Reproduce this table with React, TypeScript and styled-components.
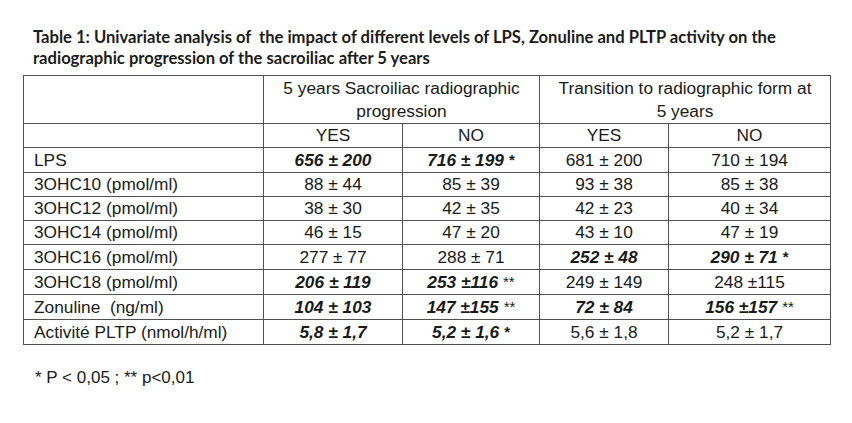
import React from "react";
import styled, { createGlobalStyle } from "styled-components";

const Global = createGlobalStyle`
  html, body { margin: 0; padding: 0; background: #fff; }
  body { font-family: "Liberation Sans", Arial, sans-serif; color: #1a1a1a; }
`;

const Page = styled.div`
  width: 852px;
  height: 423px;
  padding: 27px 0 0 23px;
  box-sizing: border-box;
  display: flex;
  flex-direction: column;
`;

const Title = styled.h1`
  margin: 0 0 0 10px;
  font-family: Lato, "Open Sans", sans-serif;
  font-weight: 700;
  font-size: 16.6px;
  line-height: 21px;
  color: #1c1c1c;
  white-space: pre;
`;

const Table = styled.table`
  margin-top: 6px;
  border-collapse: collapse;
  table-layout: fixed;
  width: 807px;
  font-family: "Liberation Sans", Arial, sans-serif;
  font-size: 17.3px;
  color: #1a1a1a;
`;

const Cell = styled.td<{ $align?: "left" | "center"; $tall?: boolean }>`
  border: 1px solid #505050;
  padding: ${(p) => (p.$align === "left" ? "0 0 0 10px" : "0")};
  text-align: ${(p) => p.$align ?? "center"};
  height: ${(p) => (p.$tall ? "47px" : "23px")};
  line-height: 23px;
  vertical-align: middle;
  white-space: pre;
  overflow: hidden;
`;

const Value = styled.span<{ $strong?: boolean }>`
  font-weight: ${(p) => (p.$strong ? 700 : 400)};
  font-style: ${(p) => (p.$strong ? "italic" : "normal")};
`;

const Star = styled.span<{ $strong?: boolean }>`
  font-weight: ${(p) => (p.$strong ? 700 : 400)};
  font-size: 15px;
  margin-left: 5px;
  vertical-align: 1px;
`;

const Footnote = styled.p`
  margin: 23px 0 0 12px;
  font-size: 17px;
  color: #1a1a1a;
`;

type V = { t: string; b?: boolean; s?: string };

const rows: { label: string; vals: V[] }[] = [
  { label: "LPS", vals: [{ t: "656 ± 200", b: true }, { t: "716 ± 199", b: true, s: "*" }, { t: "681 ± 200" }, { t: "710 ± 194" }] },
  { label: "3OHC10 (pmol/ml)", vals: [{ t: "88 ± 44" }, { t: "85 ± 39" }, { t: "93 ± 38" }, { t: "85 ± 38" }] },
  { label: "3OHC12 (pmol/ml)", vals: [{ t: "38 ± 30" }, { t: "42 ± 35" }, { t: "42 ± 23" }, { t: "40 ± 34" }] },
  { label: "3OHC14 (pmol/ml)", vals: [{ t: "46 ± 15" }, { t: "47 ± 20" }, { t: "43 ± 10" }, { t: "47 ± 19" }] },
  { label: "3OHC16 (pmol/ml)", vals: [{ t: "277 ± 77" }, { t: "288 ± 71" }, { t: "252 ± 48", b: true }, { t: "290 ± 71", b: true, s: "*" }] },
  { label: "3OHC18 (pmol/ml)", vals: [{ t: "206 ± 119", b: true }, { t: "253 ±116", b: true, s: "**" }, { t: "249 ± 149" }, { t: "248 ±115" }] },
  { label: "Zonuline  (ng/ml)", vals: [{ t: "104 ± 103", b: true }, { t: "147 ±155", b: true, s: "**" }, { t: "72 ± 84", b: true }, { t: "156 ±157", b: true, s: "**" }] },
  { label: "Activité PLTP (nmol/h/ml)", vals: [{ t: "5,8 ± 1,7", b: true }, { t: "5,2 ± 1,6", b: true, s: "*" }, { t: "5,6 ± 1,8" }, { t: "5,2 ± 1,7" }] },
];

export default function App() {
  return (
    <>
      <Global />
      <Page>
        <Title>
          {"Table 1: Univariate analysis of  the impact of different levels of LPS, Zonuline and PLTP activity on the\nradiographic progression of the sacroiliac after 5 years"}
        </Title>
        <Table>
          <colgroup>
            <col style={{ width: 240 }} />
            <col style={{ width: 139 }} />
            <col style={{ width: 137 }} />
            <col style={{ width: 129 }} />
            <col style={{ width: 162 }} />
          </colgroup>
          <tbody>
            <tr>
              <Cell $tall />
              <Cell colSpan={2} $tall>
                {"5 years Sacroiliac radiographic\nprogression"}
              </Cell>
              <Cell colSpan={2} $tall>
                {"Transition to radiographic form at\n5 years"}
              </Cell>
            </tr>
            <tr>
              <Cell />
              <Cell>YES</Cell>
              <Cell>NO</Cell>
              <Cell>YES</Cell>
              <Cell>NO</Cell>
            </tr>
            {rows.map((r) => (
              <tr key={r.label}>
                <Cell $align="left">{r.label}</Cell>
                {r.vals.map((v, i) => (
                  <Cell key={i}>
                    <Value $strong={v.b}>{v.t}</Value>
                    {v.s && <Star $strong={v.s === "*"}>{v.s}</Star>}
                  </Cell>
                ))}
              </tr>
            ))}
          </tbody>
        </Table>
        <Footnote>* P &lt; 0,05 ; ** p&lt;0,01</Footnote>
      </Page>
    </>
  );
}
